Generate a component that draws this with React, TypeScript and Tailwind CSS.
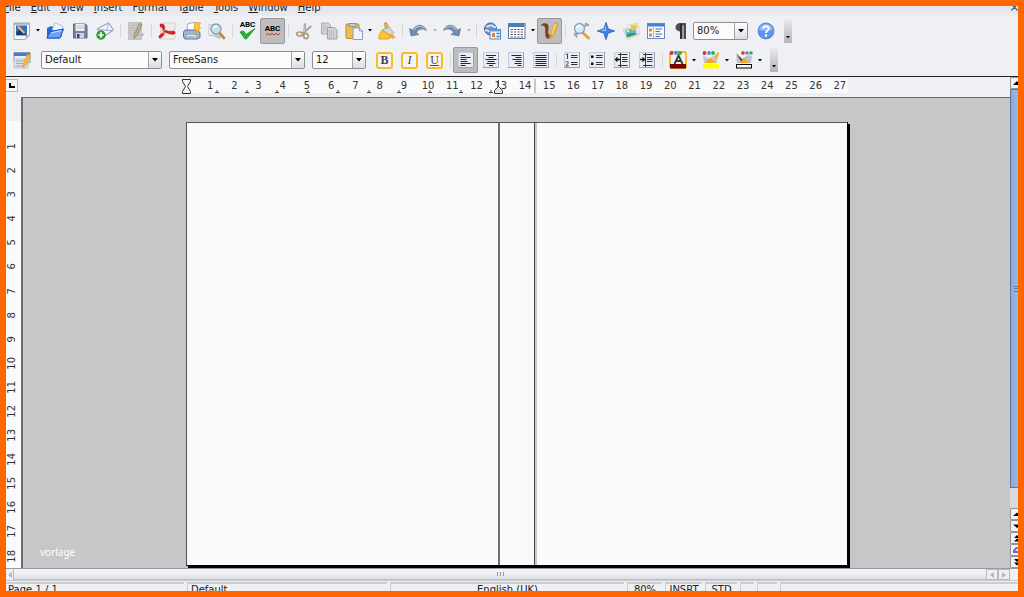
import React from "react";

type IconProps = { children: React.ReactNode };

function Icon({ children }: IconProps) {
  return (
    <svg viewBox="0 0 18 18" className="h-[18px] w-[18px] shrink-0" fill="none" aria-hidden="true">
      {children}
    </svg>
  );
}

function Tool({ label, active = false, children }: { label: string; active?: boolean; children: React.ReactNode }) {
  return (
    <button
      type="button"
      aria-label={label}
      aria-pressed={active}
      className={
        active
          ? "flex h-[26px] w-[25px] shrink-0 items-center justify-center rounded-[2px] border border-[#98989a] bg-[#bdbdbe]"
          : "flex h-[26px] w-[25px] shrink-0 items-center justify-center"
      }
    >
      <Icon>{children}</Icon>
    </button>
  );
}

function More({ label, dim = false }: { label: string; dim?: boolean }) {
  return (
    <button
      type="button"
      aria-label={label}
      className={dim ? "flex h-6 w-[9px] shrink-0 items-center justify-center text-[#b4b4b8]" : "flex h-6 w-2 shrink-0 items-center justify-center text-black"}
    >
      <svg viewBox="0 0 4 3" className="h-[3px] w-1" aria-hidden="true">
        <path d="M0 0h4L2 2.500z" fill="currentColor" />
      </svg>
    </button>
  );
}

function Sep() {
  return (
    <div className="flex w-[6px] shrink-0 justify-center">
      <div className="h-[14px] w-px bg-[#d6d7db]" />
    </div>
  );
}

function Overflow({ label }: { label: string }) {
  return (
    <button
      type="button"
      aria-label={label}
      className="ml-[6px] flex h-6 w-2 shrink-0 items-end justify-center bg-gradient-to-b from-[#e9eaed] to-[#b4b5b8] pb-[4px]"
    >
      <svg viewBox="0 0 4 3" className="h-[3px] w-1" aria-hidden="true">
        <path d="M0 0h4L2 2.500z" fill="#000" />
      </svg>
    </button>
  );
}

function Combo({ label, value, options, width }: { label: string; value: string; options: string[]; width: string }) {
  return (
    <div className={"relative flex h-[18px] shrink-0 " + width}>
      <select
        aria-label={label}
        defaultValue={value}
        className="block h-[18px] w-full appearance-none rounded-[2px] border border-[#8d8e90] bg-[#fbfbfb] pl-[3px] text-[10px] leading-4 text-[#1c1c1c]"
      >
        {options.map((o) => (
          <option key={o}>{o}</option>
        ))}
      </select>
      <span className="pointer-events-none absolute inset-y-px right-px flex w-[13px] items-center justify-center border-l border-[#a1a2a4] bg-gradient-to-b from-white to-[#dcdde0]">
        <svg viewBox="0 0 6 4" className="h-1 w-[6px]" aria-hidden="true">
          <path d="M0 0h6L3 3.500z" fill="#000" />
        </svg>
      </span>
    </div>
  );
}

const menus = ["File", "Edit", "View", "Insert", "Format", "Table", "Tools", "Window", "Help"];
const underlined = [0, 0, 0, 0, 1, 1, 0, 0, 0];

function MenuBar() {
  return (
    <nav className="flex h-[10px] shrink-0 items-end justify-between overflow-hidden bg-gradient-to-b from-[#e4e5ea] to-[#eaebef]">
      <div className="-ml-0.5 flex gap-[10px] pb-[2px]">
        {menus.map((m, i) => (
          <button key={m} type="button" className="text-[10px] leading-3 text-[#222]">
            {m.slice(0, underlined[i])}
            <span className="underline">{m[underlined[i]]}</span>
            {m.slice(underlined[i] + 1)}
          </button>
        ))}
      </div>
      <button type="button" aria-label="Close document" className="self-start">
        <svg viewBox="0 0 8 6" className="h-[6px] w-2" aria-hidden="true">
          <path d="M1.500 4.500L4.500 1L7.500 4.500M3 0l1.500 1L6 0" stroke="#55607a" strokeWidth="1.300" fill="none" />
        </svg>
      </button>
    </nav>
  );
}

function Paper() {
  return (
    <>
      <rect x="1" y="1" width="16" height="16" fill="#e9ecf5" />
      <path d="M1.500 17V1.500H17" stroke="#c3cadc" />
      <path d="M16.500 1v15.500H1" stroke="#95a0bd" />
    </>
  );
}

function StandardBar() {
  return (
    <div role="toolbar" aria-label="Standard" className="flex h-[29px] shrink-0 items-center pl-[3px]">
      <Tool label="New">
        <path d="M1 1h15.500v12.500l-4 4H1z" fill="#f2f6fc" stroke="#a2adbd" />
        <path d="M16.500 13h-4v4.500z" fill="#b6c0ce" />
        <rect x="3" y="3.500" width="11" height="10" fill="#2f6fc6" />
        <path d="M3.500 10l4-3 5 6h-9z" fill="#123a7c" />
        <path d="M4.500 4l2 .5 5.500 6-1.500 1.300L4.800 6z" fill="#f5c04a" />
        <path d="M1 2h15" stroke="#7d8da8" />
      </Tool>
      <More label="New options" />
      <Tool label="Open">
        <path d="M1 6l4-2 2 1 3-2v4l6-3v10l-3 2.500H1z" fill="#2a69d8" />
        <path d="M9 1l7.500 3v6L6 8z" fill="#f3f7ff" stroke="#8ea9d6" strokeWidth=".7" />
        <path d="M4.500 9.500L17.500 7l-3.500 9H.8z" fill="#69a5f5" stroke="#1c51bd" />
        <path d="M5.500 10.700l10-2" stroke="#c9e1ff" />
      </Tool>
      <Tool label="Save">
        <path d="M2.500 2h12l1.500 1.500V16H2.500z" fill="#7781a0" stroke="#5d6784" />
        <rect x="4.500" y="2" width="9" height="7" fill="#eceff5" />
        <path d="M5.500 4h7M5.500 6h7" stroke="#b7bfd0" />
        <rect x="5" y="11" width="8" height="5" fill="#ccd2df" />
        <rect x="6" y="12" width="2.500" height="4" fill="#414a66" />
      </Tool>
      <Tool label="E-mail">
        <path d="M1 7L12.500 .8l5 7.400L7 15z" fill="#f1f3fb" stroke="#8790ad" />
        <path d="M1.500 7l9 1.500L12.500 1M10.500 8.500l6.500 0" stroke="#a5add0" />
        <circle cx="5" cy="13" r="4.300" fill="#27a52c" stroke="#12761a" strokeWidth=".6" />
        <path d="M5 10.300v5.400M2.300 13h5.400" stroke="#fff" strokeWidth="1.700" />
      </Tool>
      <Sep />
      <Tool label="Edit file">
        <rect x="1.500" y=".5" width="13" height="17" fill="#c9c9c8" stroke="#a7a7a6" strokeDasharray="1 1" />
        <path d="M3 3.500h10M3 6h10M3 8.500h10M3 11h10M3 13.500h10" stroke="#b0b0b0" strokeDasharray="1 1" />
        <path d="M12.500 1.500l2.500 1-5 11-3 3 .3-4z" fill="#c9b088" stroke="#827566" strokeWidth=".7" />
        <path d="M10 14l6-3 1 3z" fill="#bbb" />
      </Tool>
      <Sep />
      <Tool label="Export as PDF">
        <path d="M2.500 1h14.500v16H2.500z" fill="#f1ebeb" stroke="#d6d0d2" />
        <path d="M2 2.500C5.500 1 7.500 3.500 6.500 7.500c2 1.700 4.500 2.300 9 1.500 2.500.5 2 3.500-.5 3.300-3 .2-5.500-1-7.500-2-1.500 2.500-3.500 6-6 5.700C0 15.500 1 13 4.700 11 5.500 8.500 5 5 2 4.500z" fill="#d2222a" stroke="#ad1119" strokeWidth=".5" />
        <path d="M6.500 7.500L5 11M7.500 10.500l-2.500 1" stroke="#f4c5c7" strokeWidth=".8" />
      </Tool>
      <Tool label="Print">
        <path d="M5 1.500l7-1v8H4z" fill="#fff" stroke="#9aabcf" />
        <path d="M2 8h13l2 3v4.500L14 17H2l-1.500-2v-5z" fill="#9eb4da" stroke="#5c74a7" />
        <path d="M3 12.500h11l-1 4H3.500z" fill="#eef3fc" stroke="#7589b3" strokeWidth=".6" />
        <path d="M4 15h8" stroke="#39a04c" />
        <path d="M12.500 0l5 1-2 4 2 .5-5 8 1-5.500-3 0z" fill="#ffc52b" stroke="#db8f13" strokeWidth=".6" />
      </Tool>
      <Tool label="Page preview">
        <path d="M1 2.500h10v11H1z" fill="#f4f6fa" stroke="#c1c7d1" />
        <path d="M2.500 4.500h7M2.500 12h7" stroke="#c8ced7" />
        <path d="M12 11.500l4 4.500" stroke="#c48a3f" strokeWidth="2.800" strokeLinecap="round" />
        <path d="M5 14l7 3 2-2-3-2z" fill="#c0c4cc" />
        <circle cx="8" cy="7" r="5" fill="#c4dff0" stroke="#8c9cb1" strokeWidth="1.300" />
        <path d="M5.500 6.500c.5-2 2-2.500 3.500-2" stroke="#fff" strokeWidth="1.500" />
      </Tool>
      <Sep />
      <button type="button" aria-label="Spelling" className="flex h-[26px] w-[25px] shrink-0 flex-col items-center justify-center">
        <span className="font-[Roboto,sans-serif] text-[8px] leading-[7px] font-bold text-black">ABC</span>
        <svg viewBox="0 0 17 12" className="h-3 w-[17px]" aria-hidden="true">
          <path d="M1 4l3.500-1 2.500 3.500L16 .5 7.500 11H6z" fill="#20b72b" stroke="#128a1c" strokeWidth=".7" />
        </svg>
      </button>
      <button
        type="button"
        aria-label="AutoSpellcheck"
        aria-pressed="true"
        className="flex h-[26px] w-[25px] shrink-0 flex-col items-center justify-center rounded-[2px] border border-[#98989a] bg-[#bdbdbe]"
      >
        <span className="font-[Roboto,sans-serif] text-[8px] leading-[8px] font-bold text-black">ABC</span>
        <svg viewBox="0 0 14 3" className="h-[3px] w-[14px]" aria-hidden="true">
          <path d="M0 2l2-1.500 2 1.500 2-1.500 2 1.500 2-1.500 2 1.500 2-1.500" stroke="#dc2a2a" fill="none" />
        </svg>
      </button>
      <Sep />
      <Tool label="Cut">
        <path d="M10 1.500l-.5 9M16 4l-9 8" stroke="#8e9195" strokeWidth="2.200" />
        <path d="M10 1.500l-.5 8M15.500 4l-8 7" stroke="#d2d5d8" strokeWidth=".8" />
        <ellipse cx="4.700" cy="12" rx="3" ry="2" stroke="#b09c6f" strokeWidth="1.700" />
        <ellipse cx="11" cy="14" rx="2.200" ry="2.700" stroke="#b09c6f" strokeWidth="1.700" />
      </Tool>
      <Tool label="Copy">
        <path d="M1.500 1h7l2 2v9h-9z" fill="#d2d2d3" stroke="#acacad" />
        <path d="M7.500 5.500h7l2.500 2.500v9H7.500z" fill="#d2d2d3" stroke="#a1a1a2" />
        <path d="M3 4h4M3 6h4M3 8h4M9 9h6M9 11h6M9 13h6M9 15h6" stroke="#a8a8a9" strokeDasharray="1 1" />
      </Tool>
      <Tool label="Paste">
        <rect x="1" y="2" width="13" height="14.500" rx="1" fill="#eebc4d" stroke="#c18a27" />
        <path d="M4 1.500h7v3H4z" fill="#c6cad3" stroke="#7e8696" strokeWidth=".8" />
        <path d="M8 6h6.500l3 3v8.500H8z" fill="#eff3fb" stroke="#929dbb" />
        <path d="M14.500 6v3h3" stroke="#929dbb" />
      </Tool>
      <More label="Paste options" />
      <Tool label="Format paintbrush">
        <path d="M6 1.500l2.500-1 3 6-3.500 2z" fill="#e6b15b" stroke="#b37d2c" strokeWidth=".6" />
        <path d="M4 8l7-3 5 6-3 3z" fill="#d4d7dd" stroke="#969ba6" strokeWidth=".7" />
        <path d="M4 8l9 6-2 3H1c-1-3 1-6 3-9z" fill="#ffc32f" stroke="#dc941c" strokeWidth=".8" />
        <path d="M13 11l4.500 4-2.500 2-4-2z" fill="#f2a82d" />
      </Tool>
      <Sep />
      <Tool label="Undo">
        <path d="M.5 6.500L2 14l8-1.500-2.500-2C9 7 13.500 6 17.500 8.500 15 1.500 7 1.500 3.500 8z" fill="#6f8bb0" stroke="#58718f" strokeWidth=".6" />
        <path d="M4.500 8.500C7 3.500 12 3 15.500 6.500" stroke="#a9bdd6" strokeWidth="1.200" />
      </Tool>
      <More label="Undo history" dim />
      <Tool label="Redo">
        <path d="M17.500 6.500L16 14l-8-1.500 2.500-2C9 7 4.500 6 .5 8.500 3 1.500 11 1.500 14.500 8z" fill="#6f8bb0" stroke="#58718f" strokeWidth=".6" />
        <path d="M13.500 8.500C11 3.500 6 3 2.500 6.500" stroke="#a9bdd6" strokeWidth="1.200" />
      </Tool>
      <More label="Redo history" dim />
      <Sep />
      <Tool label="Hyperlink">
        <circle cx="7.500" cy="7" r="6" fill="#7292ca" stroke="#3e5d99" />
        <path d="M3 4c2 2 4-1.500 6-.5s2 3 4 1M2 9c2-2 3 0 5 1" stroke="#e6eefb" strokeWidth="1.500" />
        <rect x="7" y="7.500" width="10.500" height="9.500" fill="#eef6ff" stroke="#4a87cd" />
        <path d="M7 8.500h10.500" stroke="#5aa0e7" strokeWidth="2" />
        <path d="M9 11h3v4H9z" fill="#f07b25" />
        <path d="M13.500 11.500h3M13.500 14.500h3" stroke="#477db9" strokeWidth="1.500" />
      </Tool>
      <Tool label="Table">
        <rect x=".5" y="1.500" width="16.500" height="15" fill="#fff" stroke="#627b9d" />
        <rect x="1" y="2" width="15.500" height="3" fill="#4c7cc0" />
        <path d="M2.500 7.500h12.500M2.500 10h12.500M2.500 12.500h12.500M2.500 15h12.500" stroke="#555d68" strokeWidth="1" strokeDasharray="2.300 1.100" />
      </Tool>
      <More label="Table size" />
      <Tool label="Show draw functions" active>
        <path d="M.5 2.500C3 .5 7 .5 7.500 4c.5 3.500-1.500 8 1.500 9.500L7.500 17C2.500 16 5 9.500 4 5.500 3.500 3.500 2 3.500 .5 4z" fill="#7b4320" />
        <path d="M7.500 17c3-.5 5-4.500 6-8l-2.500-1c-.5 2.500-1 4.500-2.200 5.500z" fill="#e9812a" />
        <path d="M14 .5l3 1.500-4 11-3.200 2.800.5-4.800z" fill="#ffb629" stroke="#e08a1c" strokeWidth=".6" />
        <path d="M14.300 2l-3.300 9.500" stroke="#ffe27f" />
      </Tool>
      <Sep />
      <Tool label="Find and replace">
        <path d="M12.500 4.500l3-3M13 1.500l4 2M2 13l4-1.500M3 10.500l2 5" stroke="#9da4b7" strokeWidth="2" />
        <path d="M11 11l5.500 5" stroke="#e3a233" strokeWidth="2.800" strokeLinecap="round" />
        <circle cx="7.500" cy="6.500" r="5" fill="#d5ebf8" stroke="#899eba" strokeWidth="1.300" />
        <path d="M5 6c.3-2 2-2.500 3.500-2.300" stroke="#fff" strokeWidth="1.500" />
      </Tool>
      <Tool label="Navigator">
        <path d="M9 .3l2.200 6.500L17.700 9l-6.500 2.200L9 17.700l-2.200-6.500L.3 9l6.500-2.200z" fill="#4083e4" stroke="#1d58b8" strokeWidth=".7" />
        <path d="M9 3v6H3l4.500-1.500z" fill="#9fcbff" />
      </Tool>
      <Tool label="Gallery">
        <path d="M5 3.500L16 1l1.500 11L6 16z" fill="#f3f4f6" stroke="#c6ccd4" strokeWidth=".7" />
        <path d="M1 7.500l13-2.500 2 8.500-11 3.500z" fill="#eef1f4" stroke="#bcc3cd" strokeWidth=".7" />
        <path d="M3 8l10-2 1.500 6.500-9.500 3z" fill="#5fb4e2" />
        <path d="M4.500 12.500l4-1.500 5.500 0 .5 1.500-9.500 3z" fill="#3b9d4e" />
        <circle cx="6" cy="9" r="1.300" fill="#fff17e" />
        <path d="M8 3.500l7-1.300.5 3.300-5 3.500z" fill="#f0cb36" />
      </Tool>
      <Tool label="Data sources">
        <rect x=".5" y="1.500" width="17" height="15" fill="#f6faff" stroke="#6687bb" />
        <rect x="1" y="2" width="16" height="2.500" fill="#4180db" />
        <path d="M6.500 5v11" stroke="#9fb6da" />
        <path d="M2 6.500h3v3H2zM2 11.500h3v3H2z" fill="#f1822f" />
        <path d="M8.500 7h6.500M8.500 9.500h4.500M8.500 12h6.500M8.500 14.500h4.500" stroke="#4f73a8" />
      </Tool>
      <Tool label="Nonprinting characters">
        <path d="M14 1v16h-2.500V3.500H10.500V17H8v-7.500C5 9 3.500 7.500 3.500 5.500 3.500 2.500 5.500 1 8.500 1z" fill="#4d4d4f" />
        <path d="M9 1.500v15" stroke="#252527" strokeWidth="1.500" />
      </Tool>
      <Combo label="Zoom" value="80%" options={["50%", "80%", "100%"]} width="w-[55px]" />
      <div className="ml-[5px] flex">
        <Tool label="Help">
          <circle cx="9" cy="9" r="8" fill="#5e94ed" stroke="#3d6fce" strokeWidth=".7" />
          <path d="M2 8c1-8 13-8 14 0-4 1-9 1-14 0z" fill="#8db8fa" />
          <path d="M6.200 6.800C6.200 3.500 11.800 3.500 11.800 6.500 11.800 8.500 9 8.500 9 11" stroke="#fff" strokeWidth="1.900" />
          <circle cx="9" cy="13.500" r="1.200" fill="#fff" />
        </Tool>
      </div>
      <Overflow label="More standard tools" />
    </div>
  );
}

function Glyph({ label, style }: { label: string; style: string }) {
  return (
    <button type="button" aria-label={label} className="flex h-[26px] w-[25px] shrink-0 items-center justify-center">
      <span
        className={
          "flex h-[17px] w-[17px] items-center justify-center rounded-[3px] border-2 border-[#fabb27] bg-[#f4f4f3] font-['Liberation_Serif',serif] text-[12px] leading-3 text-[#444] " + style
        }
      >
        {label[0]}
      </span>
    </button>
  );
}

function Balls() {
  return (
    <>
      <circle cx="2.500" cy="2" r="1.900" fill="#d92d32" />
      <circle cx="7" cy="2" r="1.900" fill="#4a89e2" />
      <circle cx="11" cy="2" r="1.900" fill="#39a943" />
    </>
  );
}

function FormatBar() {
  return (
    <div role="toolbar" aria-label="Formatting" className="flex h-[30px] shrink-0 items-center pl-[3px]">
      <Tool label="Styles and formatting">
        <path d="M1 1.500h16v10H1z" fill="#eef3fb" stroke="#8796b2" />
        <path d="M1 2h16v3H1z" fill="#3f7fda" />
        <path d="M1 8h14v9H1z" fill="#dce0e5" stroke="#bfc4cc" />
        <path d="M3 10h8M3 12.500h7M3 15h7" stroke="#a6acb5" />
        <path d="M14.500 3l3 1.500-4 9-3.500 3 .5-4.500z" fill="#f6b832" stroke="#dd9a22" strokeWidth=".6" />
      </Tool>
      <div className="flex gap-[7px] pr-[6px] pl-[7px]">
        <Combo label="Paragraph style" value="Default" options={["Default", "Heading"]} width="w-[121px]" />
        <Combo label="Font name" value="FreeSans" options={["FreeSans", "FreeSerif"]} width="w-[136px]" />
        <Combo label="Font size" value="12" options={["10", "12", "14"]} width="w-[54px]" />
      </div>
      <Glyph label="Bold" style="font-bold" />
      <Glyph label="Italic" style="italic" />
      <Glyph label="Underline" style="underline" />
      <Sep />
      <Tool label="Align left" active>
        <Paper />
        <path d="M3.500 4.500h5M3.500 6.500h10M3.500 8.500h6M3.500 10.500h7M3.500 12.500h10M3.500 14.500h5" stroke="#262626" />
      </Tool>
      <Tool label="Centre">
        <Paper />
        <path d="M4 4.500h10M6.500 6.500h5M3.500 8.500h11M5.500 10.500h7M4.500 12.500h9M7 14.500h4" stroke="#262626" />
      </Tool>
      <Tool label="Align right">
        <Paper />
        <path d="M4.500 4.500h10M8.500 6.500h6M5.500 8.500h9M8.500 10.500h6M7.500 12.500h7M10.500 14.500h4" stroke="#262626" />
      </Tool>
      <Tool label="Justify">
        <Paper />
        <path d="M3.500 4.500h11M3.500 6.500h11M3.500 8.500h11M3.500 10.500h11M3.500 12.500h11M3.500 14.500h11" stroke="#262626" />
      </Tool>
      <Sep />
      <Tool label="Numbering">
        <Paper />
        <path d="M3 3.500l1.500-.5V8M2.800 11.500c.5-1.500 3-1 2.500.5L2.800 15h3" stroke="#444" />
        <path d="M8 4.500h6.500M8 6.500h6.500M8 11.500h6.500M8 13.500h6.500" stroke="#333" strokeWidth="1.200" />
      </Tool>
      <Tool label="Bullets">
        <Paper />
        <path d="M3 4.500h2.500V7H3zM3 11.500h2.500V14H3z" fill="#111" />
        <path d="M8 4.500h6.500M8 6.500h6.500M8 11.500h6.500M8 13.500h6.500" stroke="#333" strokeWidth="1.200" />
      </Tool>
      <Tool label="Decrease indent">
        <Paper />
        <path d="M5 3.500h9.500M9 6.500h5.500M9 8.500h5.500M9 10.500h5.500M5 14.500h9.500M7.500 2v14" stroke="#333" />
        <path d="M7.500 8.500H2.500M4.500 6.500l-2 2 2 2" stroke="#111" strokeWidth="1.300" />
      </Tool>
      <Tool label="Increase indent">
        <Paper />
        <path d="M5 3.500h9.500M9 6.500h5.500M9 8.500h5.500M9 10.500h5.500M5 14.500h9.500M7.500 2v14" stroke="#333" />
        <path d="M2 8.500h5M4.500 6.500l2 2-2 2" stroke="#111" strokeWidth="1.300" />
      </Tool>
      <Sep />
      <Tool label="Font colour">
        <rect x="1" y="1" width="16" height="16" rx="2" fill="#f1f1ee" stroke="#f9b427" strokeWidth="1.800" />
        <path d="M5.500 13L9.500 4.500l4 8.500M7 10h5" stroke="#3a3f3a" strokeWidth="1.900" />
        <Balls />
        <path d="M1 13h16v4.500H1z" fill="#780000" />
      </Tool>
      <More label="Choose font colour" />
      <Tool label="Highlighting">
        <path d="M1 4l6 4 6-4 3 0-1 8H2z" fill="#c3c6cc" />
        <path d="M3 12l5-5.500 6 5.500z" fill="#f5a623" />
        <path d="M12 6l3.500-5 2 1-2.500 6z" fill="#f1b83c" />
        <Balls />
        <path d="M1 13h16v4.500H1z" fill="#ffff00" />
      </Tool>
      <More label="Choose highlight colour" />
      <Tool label="Background colour">
        <path d="M1 4l6 4 6-4 4 1-1 7H2z" fill="#bfc2c8" />
        <path d="M1 2l8 8-2 2z" fill="#4b4540" />
        <path d="M5 12l4-5 5 5z" fill="#f5a623" />
        <circle cx="8" cy="2" r="1.800" fill="#d92d32" />
        <circle cx="12" cy="2" r="1.800" fill="#4a89e2" />
        <circle cx="16" cy="2" r="1.800" fill="#39a943" />
        <rect x="1.500" y="13.500" width="15" height="3.500" fill="#f8f8f8" stroke="#000" />
      </Tool>
      <More label="Choose background colour" />
      <Overflow label="More formatting tools" />
    </div>
  );
}

const horizontal = Array.from({ length: 27 }, (_, i) => i + 1);
const vertical = Array.from({ length: 18 }, (_, i) => i + 1);
const tabStops = [31, 61, 91, 122, 152, 183, 213, 244, 275, 305];

function HorizontalRuler() {
  return (
    <div className="flex h-5 shrink-0 items-start pt-[2px]">
      <button
        type="button"
        aria-label="Tab type"
        className="flex h-[13px] w-3 shrink-0 items-center justify-center border border-l-0 border-[#b7b8bb] bg-[#f4f5f7]"
      >
        <svg viewBox="0 0 6 5" className="h-[5px] w-[6px]" aria-hidden="true">
          <path d="M1 0v4h5" stroke="#000" strokeWidth="2" fill="none" />
        </svg>
      </button>
      <div className="ml-[6px] flex flex-1 justify-center">
        <div className="relative h-[14px] w-[662px] bg-[#fafafb]">
          <div className="-mr-1 ml-3 grid grid-cols-[repeat(27,minmax(0,1fr))] text-center text-[10px] leading-[13px] text-[#333]">
            {horizontal.map((n) => (
              <span key={n}>{n}</span>
            ))}
          </div>
          <svg viewBox="-5 0 668 16" className="absolute top-0 -left-[5px] h-4 w-[668px]" fill="none" aria-hidden="true">
            {tabStops.map((x) => (
              <path key={x} d={`M${x - 2} 13.500h4M${x} 11v3`} stroke="#444" />
            ))}
            <path d="M-3.500 .5H4.500V2.500L1.500 7.500 4.500 12.500V14.500H-3.500V12.500L-.5 7.500-3.500 2.500z" fill="#f4f4f5" stroke="#333" />
            <path d="M308.500 14.500v-3l4-4 4 4v3zM312.500 1v7" fill="#e5e5e6" stroke="#444" />
            <path d="M349 0v14" stroke="#c8c8ca" strokeWidth="2" />
          </svg>
        </div>
      </div>
    </div>
  );
}

function VerticalRuler() {
  return (
    <div className="flex w-[15px] shrink-0 flex-col pt-6">
      <div className="flex flex-1 justify-start bg-[#fafafb] pt-[13px]">
        <div className="grid flex-1 grid-rows-[repeat(18,minmax(0,1fr))] pr-2">
          {vertical.map((n) => (
            <span key={n} className="flex items-center justify-center text-[10px] leading-3 text-[#333]">
              <span className="rotate-180 [writing-mode:vertical-rl]">{n}</span>
            </span>
          ))}
        </div>
      </div>
    </div>
  );
}

function PageArea() {
  return (
    <main className="relative flex min-h-0 flex-1 justify-center overflow-hidden border-t border-l-2 border-[#6b6b6d] bg-[#c6c7c9] pt-6 pb-[2px] pl-px">
      <article className="flex w-[662px] border border-t-[#555] border-r-black border-b-black border-l-[#555] bg-[#fafafa] shadow-[2px_2px_0_#000]">
        <section className="flex-1 border-r-2 border-[#707072]" />
        <section className="w-[34px]" />
        <section className="w-[313px] border-l border-[#444]">
          <div className="h-full w-[2px] bg-[#c9c9cb]" />
        </section>
      </article>
      <span className="absolute bottom-2 left-[17px] font-['Noto_Sans',sans-serif] text-[10px] leading-4 text-white">vorlage</span>
    </main>
  );
}

function ScrollButton({ label, path, color = "#000" }: { label: string; path: string; color?: string }) {
  return (
    <button
      type="button"
      aria-label={label}
      className="flex h-3 w-full shrink-0 items-center justify-end overflow-hidden rounded-l-[2px] border border-r-0 border-[#929396] bg-[#f3f3f5]"
    >
      <svg viewBox="0 0 5 8" className="h-2 w-[5px] shrink-0" aria-hidden="true">
        <path d={path} fill={color} />
      </svg>
    </button>
  );
}

function VerticalScroll() {
  return (
    <div className="flex w-2 shrink-0 flex-col bg-[#d8d9de]">
      <ScrollButton label="Scroll up" path="M0 6L4 2l4 4z" />
      <div className="flex flex-1 items-center justify-end border border-r-0 border-[#60759f] bg-gradient-to-r from-[#8fa8d9] to-[#a1b6de]">
        <div className="flex h-[6px] w-1 flex-col justify-center border-y border-[#5e78ae]">
          <div className="h-px bg-[#5e78ae]" />
        </div>
      </div>
      <div className="h-[20px]" />
      <ScrollButton label="Scroll up one line" path="M0 6l4-3.500 4 3.500z" />
      <ScrollButton label="Scroll down" path="M0 2.500h8L4 6z" />
      <ScrollButton label="Previous page" path="M1 4l3-3 3 3zM1 7.500l3-3 3 3z" />
      <ScrollButton label="Navigation" path="M0 7V4l3-3h2v1L2 5h3v2z" color="#6868dc" />
      <ScrollButton label="Next page" path="M1 1h6L4 4zM1 4.500h6l-3 3z" />
    </div>
  );
}

function HorizontalScroll() {
  const side = "flex h-full w-3 shrink-0 items-center justify-center border border-[#b8b9bd] bg-[#eeeff1] text-[#b5b6b9]";
  return (
    <div className="flex h-3 shrink-0 border-t border-[#999aa2] pr-2">
      <button type="button" aria-label="Scroll left" className="flex h-full w-2 shrink-0 items-center justify-center border-r border-[#b8b9bd] text-[#b5b6b9]">
        <svg viewBox="0 0 4 6" className="h-[6px] w-1" aria-hidden="true">
          <path d="M4 0v6L0 3z" fill="currentColor" />
        </svg>
      </button>
      <div className="flex flex-1 items-center justify-center gap-px border-b border-[#bfc0c8] bg-gradient-to-b from-[#f4f5f8] via-[#eeeff3] to-[#dddee4]">
        <div className="h-1 w-px bg-[#9495a2]" />
        <div className="ml-px h-1 w-px bg-[#9495a2]" />
        <div className="ml-px h-1 w-px bg-[#9495a2]" />
      </div>
      <button type="button" aria-label="Scroll left one step" className={side}>
        <svg viewBox="0 0 4 6" className="h-[6px] w-1" aria-hidden="true">
          <path d="M4 0v6L0 3z" fill="currentColor" />
        </svg>
      </button>
      <button type="button" aria-label="Scroll right" className={side}>
        <svg viewBox="0 0 4 6" className="h-[6px] w-1" aria-hidden="true">
          <path d="M0 0v6l4-3z" fill="currentColor" />
        </svg>
      </button>
    </div>
  );
}

function StatusBar() {
  const cell = "border-t-2 border-l border-[#cccdd0] text-[10px] leading-3 whitespace-nowrap text-[#222] ";
  return (
    <footer className="flex h-[11px] shrink-0 gap-[3px] overflow-hidden border-t border-[#c6c7ca] pt-px">
      <div className={cell + "w-[178px] border-l-0 pl-[2px]"}>Page 1 / 1</div>
      <div className={cell + "w-[200px] pl-[3px]"}>Default</div>
      <div className={cell + "w-[234px] text-center"}>English (UK)</div>
      <div className={cell + "w-[35px] text-center"}>80%</div>
      <div className={cell + "w-[37px] text-center"}>INSRT</div>
      <div className={cell + "w-[32px] text-center"}>STD</div>
      <div className={cell + "w-[14px]"} />
      <div className={cell + "w-[20px]"} />
      <div className={cell + "flex-1"} />
    </footer>
  );
}

export default function App() {
  return (
    <div className="flex h-screen flex-col overflow-hidden border-6 border-[#ff6600] bg-[#eff0f4] font-['DejaVu_Sans',sans-serif]">
      <MenuBar />
      <StandardBar />
      <FormatBar />
      <div className="mt-px flex min-h-0 flex-1 border-t border-[#222]">
        <div className="flex min-w-0 flex-1 flex-col">
          <HorizontalRuler />
          <div className="flex min-h-0 flex-1">
            <VerticalRuler />
            <PageArea />
          </div>
        </div>
        <VerticalScroll />
      </div>
      <HorizontalScroll />
      <StatusBar />
    </div>
  );
}
